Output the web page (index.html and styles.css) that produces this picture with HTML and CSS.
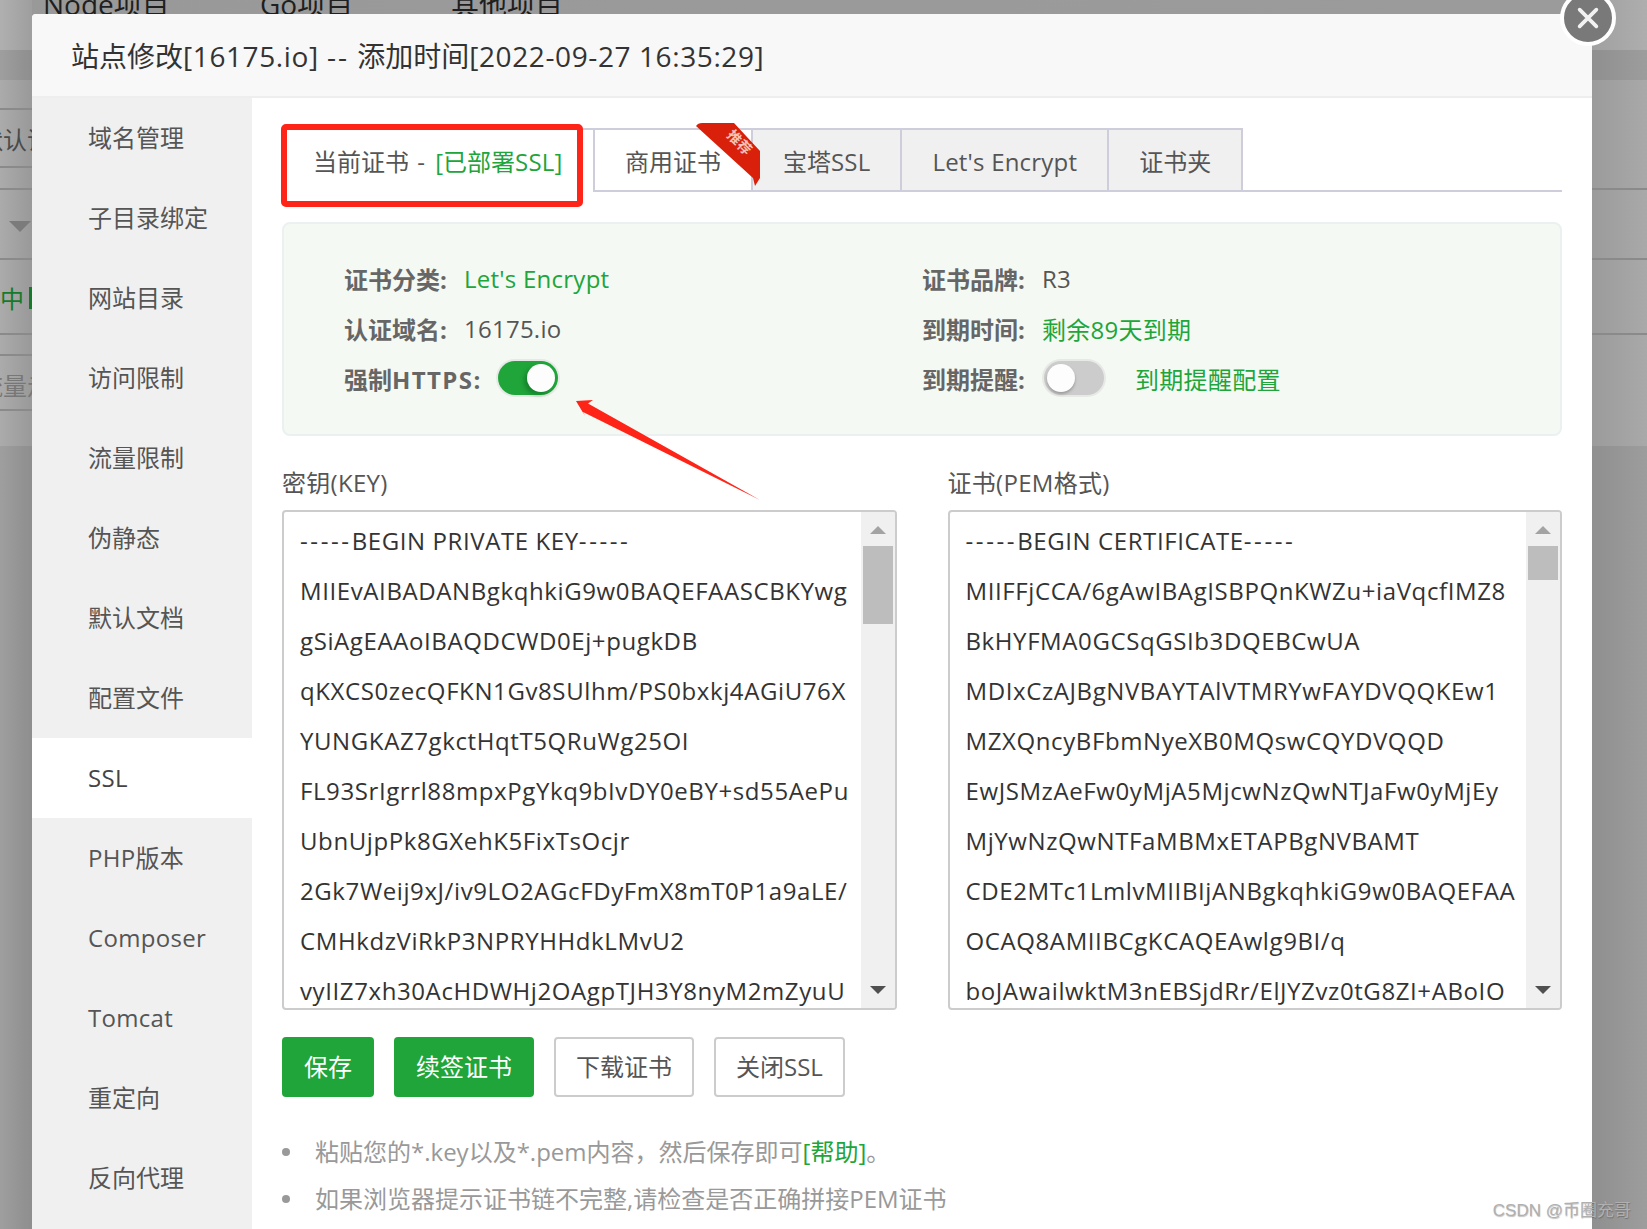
FILE: index.html
```html
<!DOCTYPE html>
<html lang="zh-CN">
<head>
<meta charset="utf-8">
<title>站点修改</title>
<link rel="stylesheet" href="styles.css">
</head>
<body>
<div class="page">
  <div class="bg">
    <div class="bg-side">
      <div class="b b50 light"></div>
      <div class="b b30 dark"></div>
      <div class="b b30 line"></div>
      <div class="b b58 line"><span class="bg-text clip-a">默认证</span></div>
      <div class="b b22 line"></div>
      <div class="b b70 line"><span class="caret"></span></div>
      <div class="b b75 line"><span class="bg-green">中<i class="bg-flag"></i></span></div>
      <div class="b b21 line"></div>
      <div class="b b55 line"><span class="bg-text clip-b">流量走</span></div>
      <div class="b b35"></div>
      <div class="b fill dark"></div>
    </div>
    <div class="bg-mid">
      <div class="bg-nav"><span>Node项目</span><span>Go项目</span><span>其他项目</span></div>
    </div>
    <div class="bg-side bg-right">
      <div class="b b50 light"></div>
      <div class="b b30 dark"></div>
      <div class="b b110 line"></div>
      <div class="b b70 line"></div>
      <div class="b b75 line"></div>
      <div class="b b111"></div>
      <div class="b fill dark"></div>
    </div>
  </div>

  <div class="modal">
    <div class="modal-head">站点修改<span class="lat">[16175.io]</span> <span class="dd dd-title">--</span> 添加时间<span class="lat">[2022-09-27 16:35:29]</span></div>
    <div class="modal-body">
      <nav class="side">
        <a>域名管理</a><a>子目录绑定</a><a>网站目录</a><a>访问限制</a><a>流量限制</a><a>伪静态</a><a>默认文档</a><a>配置文件</a><a class="on lt">SSL</a><a class="lt">PHP版本</a><a class="lt">Composer</a><a class="lt">Tomcat</a><a>重定向</a><a>反向代理</a>
      </nav>
      <main class="main">
        <div class="tabs">
          <div class="tab tab-on">当前证书 <span class="dd">-</span> <span class="green">[已部署<span class="lat2">SSL</span>]</span></div>
          <div class="tab tab-first">商用证书
            <svg class="ribbon" width="66" height="68" viewBox="0 0 66 68" aria-hidden="true">
              <path class="ribbon-fill" d="M1 5 Q3 2 7 2 L39 2 L65 30 L65 57 L60 65 L58 57 Z"/>
              <text class="ribbon-text" transform="translate(41 25) rotate(45)" text-anchor="middle">推荐</text>
            </svg>
          </div>
          <div class="tab"><span>宝塔</span><span class="lat2">SSL</span></div>
          <div class="tab"><span class="lat2">Let's Encrypt</span></div>
          <div class="tab">证书夹</div>
          <div class="annot"></div>
        </div>

        <section class="info">
          <div class="row"><b class="lab">证书分类:</b><span class="green val">Let's Encrypt</span></div>
          <div class="row"><b class="lab">证书品牌:</b><span class="val">R3</span></div>
          <div class="row"><b class="lab">认证域名:</b><span class="val">16175.io</span></div>
          <div class="row"><b class="lab">到期时间:</b><span class="green val">剩余89天到期</span></div>
          <div class="row"><b class="lab lab-wide">强制<span class="https">HTTPS</span>:</b><span class="toggle toggle-on"><i></i></span></div>
          <div class="row"><b class="lab">到期提醒:</b><span class="toggle toggle-off"><i></i></span><a class="green cfg">到期提醒配置</a></div>
        </section>

        <section class="keys">
          <div class="key">
            <div class="key-label">密钥(KEY)</div>
            <div class="ta">
              <div class="ta-text"><span class="dash">-----</span>BEGIN PRIVATE KEY<span class="dash">-----</span><br>MIIEvAIBADANBgkqhkiG9w0BAQEFAASCBKYwg<br>gSiAgEAAoIBAQDCWD0Ej+pugkDB<br>qKXCS0zecQFKN1Gv8SUlhm/PS0bxkj4AGiU76X<br>YUNGKAZ7gkctHqtT5QRuWg25OI<br>FL93SrIgrrl88mpxPgYkq9bIvDY0eBY+sd55AePu<br>UbnUjpPk8GXehK5FixTsOcjr<br>2Gk7Weij9xJ/iv9LO2AGcFDyFmX8mT0P1a9aLE/<br>CMHkdzViRkP3NPRYHHdkLMvU2<br>vyIIZ7xh30AcHDWHj2OAgpTJH3Y8nyM2mZyuU</div>
              <div class="sb"><span class="sb-up"></span><span class="thumb thumb-l"></span><span class="sb-down"></span></div>
            </div>
          </div>
          <div class="key">
            <div class="key-label">证书(PEM格式)</div>
            <div class="ta">
              <div class="ta-text"><span class="dash">-----</span>BEGIN CERTIFICATE<span class="dash">-----</span><br>MIIFFjCCA/6gAwIBAgISBPQnKWZu+iaVqcfIMZ8<br>BkHYFMA0GCSqGSIb3DQEBCwUA<br>MDIxCzAJBgNVBAYTAlVTMRYwFAYDVQQKEw1<br>MZXQncyBFbmNyeXB0MQswCQYDVQQD<br>EwJSMzAeFw0yMjA5MjcwNzQwNTJaFw0yMjEy<br>MjYwNzQwNTFaMBMxETAPBgNVBAMT<br>CDE2MTc1LmlvMIIBIjANBgkqhkiG9w0BAQEFAA<br>OCAQ8AMIIBCgKCAQEAwlg9BI/q<br>boJAwailwktM3nEBSjdRr/ElJYZvz0tG8ZI+ABoIO</div>
              <div class="sb"><span class="sb-up"></span><span class="thumb thumb-r"></span><span class="sb-down"></span></div>
            </div>
          </div>
        </section>

        <div class="btns">
          <button class="btn btn-g">保存</button>
          <button class="btn btn-g">续签证书</button>
          <button class="btn btn-w">下载证书</button>
          <button class="btn btn-w">关闭SSL</button>
        </div>

        <ul class="help">
          <li>粘贴您的*.key以及*.pem内容&#xFF0C;然后保存即可<span class="green">[帮助]</span>。</li>
          <li>如果浏览器提示证书链不完整,请检查是否正确拼接PEM证书</li>
        </ul>
      </main>
    </div>
  </div>

  <div class="close"><svg width="26" height="26" viewBox="0 0 28 28" aria-hidden="true"><path d="M5 5 L23 23 M23 5 L5 23"/></svg></div>

  <svg class="arrow" width="200" height="110" viewBox="570 395 200 110" aria-hidden="true">
    <polygon points="576,401 593,400 588,403.500 760,500 583,412 585,416"/>
  </svg>

  <div class="mark">CSDN @币圈充哥</div>
</div>
</body>
</html>
```
FILE: styles.css
```css
* { box-sizing: border-box; }
html, body { margin: 0; padding: 0; height: 100%; }
body {
  font-family: "Open Sans", "Noto Sans CJK SC", sans-serif;
  font-size: 24px;
  color: #444;
}
.page {
  position: relative;
  width: 1647px;
  height: 1229px;
  overflow: hidden;
  background: linear-gradient(90deg, #ababab 0, #999 32px, #9b9b9b 1592px, #a9a9a9 100%);
}

/* dimmed page behind the dialog */
.bg { display: flex; height: 100%; }
.bg-side { width: 32px; flex: none; display: flex; flex-direction: column; overflow: hidden; }
.bg-right { width: 55px; }
.bg-mid { flex: 1; overflow: hidden; }
.bg-nav { display: flex; font-size: 28px; line-height: 28px; margin-top: -10px; padding-left: 11px; color: #1f1f1f; }
.bg-nav span:nth-child(1) { width: 217px; }
.bg-nav span:nth-child(2) { width: 191px; }
.b { flex: none; display: flex; align-items: center; white-space: nowrap; }
.b50 { height: 50px; }
.b30 { height: 30px; }
.b58 { height: 58px; }
.b22 { height: 22px; }
.b70 { height: 70px; }
.b75 { height: 75px; }
.b21 { height: 21px; }
.b55 { height: 55px; }
.b35 { height: 35px; }
.b110 { height: 110px; }
.b111 { height: 111px; }
.fill { flex: 1; }
.line { border-bottom: 2px solid #8a8a8a; }
.light { background: rgba(255, 255, 255, .06); }
.dark { background: rgba(0, 0, 0, .07); }
.bg-text { font-size: 24px; color: #4a4a4a; margin-left: -21px; }
.clip-b { color: #777; padding-top: 3px; }
.caret { width: 0; height: 0; margin: 4px 0 0 9px; border: 11px solid transparent; border-top: 11px solid #7b7b7b; border-bottom: 0; }
.bg-green { display: flex; align-items: center; color: #157a2a; font-size: 24px; padding-top: 2px; }
.bg-flag { display: block; width: 6px; height: 22px; margin-left: 5px; background: #157a2a; }

/* dialog */
.modal {
  position: absolute;
  left: 32px;
  top: 14px;
  width: 1560px;
  height: 1215px;
  background: #fff;
  border-radius: 4px 4px 0 0;
  overflow: hidden;
  display: flex;
  flex-direction: column;
}
.modal-head {
  flex: none;
  height: 84px;
  padding-left: 39px;
  line-height: 85px;
  font-size: 28px;
  color: #333;
  background: #f8f8f8;
  border-bottom: 2px solid #eee;
  white-space: nowrap;
}
.lat { letter-spacing: .6px; }
.lat2 { letter-spacing: .2px; }
.dd { letter-spacing: 2px; margin: 0 2px; }
.dd-title { margin: 0 1px; }
.modal-body { flex: 1; display: flex; min-height: 0; }
.side { flex: none; width: 220px; background: #f0f0f0; }
.side a { display: block; height: 80px; line-height: 79px; padding-left: 56px; color: #555; }
.side a.on { background: #fff; color: #444; }
.side a.lt { letter-spacing: .3px; }
.main { flex: 1; padding: 30px 30px 0; }
.green { color: #20a53a; }

/* tabs */
.tabs { position: relative; display: flex; height: 64px; border-bottom: 2px solid #cdcddc; }
.tab {
  position: relative;
  height: 64px;
  padding: 0 30px;
  line-height: 63px;
  background: #f0f0f0;
  border-top: 2px solid #cdcddc;
  border-right: 2px solid #cdcddc;
  border-bottom: 2px solid #cdcddc;
  white-space: nowrap;
  color: #555;
}
.tab-first { border-left: 2px solid #cdcddc; z-index: 1; background: none; }
.tab-on { width: 311px; padding: 0 0 0 31px; background: #fff; border-right: 0; border-bottom-color: #fff; }
.annot {
  position: absolute;
  z-index: 2;
  left: -1px;
  top: -4px;
  width: 302px;
  height: 83px;
  border: 6px solid #ff2418;
  border-radius: 5px;
}
.ribbon { position: absolute; left: 100px; top: -9px; }
.ribbon-fill { fill: #d9200a; }
.ribbon-text { font-size: 14px; font-weight: 700; fill: #f4c2b8; }

/* info panel */
.info {
  display: grid;
  grid-template-columns: 578px 1fr;
  grid-auto-rows: 50px;
  height: 214px;
  margin-top: 30px;
  padding: 29px 0 0 60px;
  background: #f5f9f3;
  border: 2px solid #ebf1f1;
  border-radius: 8px;
}
.row { display: flex; align-items: center; white-space: nowrap; color: #555; }
.val { letter-spacing: .25px; }
.lab { width: 120px; flex: none; color: #666; font-weight: 700; }
.lab-wide { width: 154px; }
.https { letter-spacing: 1.4px; }
.toggle {
  position: relative;
  display: block;
  width: 60px;
  height: 34px;
  border-radius: 17px;
  background: #ccc;
  box-shadow: 0 0 0 2px #e6e9e5;
}
.toggle-on { background: #20a53a; }
.toggle-off { margin-left: 2px; }
.toggle i {
  position: absolute;
  left: 3px;
  top: 3px;
  width: 28px;
  height: 28px;
  border-radius: 50%;
  background: #fdfdfd;
  box-shadow: 0 2px 3px rgba(0, 0, 0, .25);
}
.toggle-on i { left: 29px; box-shadow: -3px 3px 4px rgba(0, 70, 20, .35); }
.cfg { margin-left: 31px; letter-spacing: .3px; }

/* key and cert */
.keys { display: grid; grid-template-columns: 1fr 1fr; gap: 51px; margin-top: 29px; }
.key-label { height: 36px; line-height: 36px; margin-bottom: 9px; color: #555; white-space: nowrap; letter-spacing: .3px; }
.ta {
  display: flex;
  height: 500px;
  background: #fff;
  border: 2px solid #ccc;
  border-radius: 4px;
  overflow: hidden;
}
.ta-text {
  flex: 1;
  min-width: 0;
  padding: 4px 0 0 16px;
  line-height: 50px;
  color: #333;
  white-space: nowrap;
  overflow: hidden;
  letter-spacing: .6px;
}
.dash { letter-spacing: 2.6px; }
.sb { flex: none; width: 34px; display: flex; flex-direction: column; align-items: center; background: #f0f0f0; }
.sb-up, .sb-down { flex: none; width: 0; height: 0; border-left: 8px solid transparent; border-right: 8px solid transparent; }
.sb-up { margin: 14px 0 12px; border-bottom: 8px solid #a3a3a3; }
.sb-down { margin: auto 0 14px; border-top: 8px solid #505050; }
.thumb { flex: none; width: 30px; background: #bdbdbd; }
.thumb-l { height: 78px; }
.thumb-r { height: 34px; }

/* buttons */
.btns { display: flex; gap: 20px; margin-top: 27px; }
.btn {
  height: 60px;
  padding: 0 20px 4px;
  font: inherit;
  border-radius: 4px;
  white-space: nowrap;
}
.btn-g { background: #20a53a; border: 0; color: #fff; padding: 0 22px 4px; }
.btn-w { background: #fff; border: 2px solid #ccc; color: #555; }

/* help */
.help { list-style: none; margin: 31px 0 0; padding: 0; color: #999; }
.help li { position: relative; height: 47px; line-height: 48px; padding-left: 33px; white-space: nowrap; }
.help li::before {
  content: "";
  position: absolute;
  left: 0;
  top: 20px;
  width: 8px;
  height: 8px;
  border-radius: 50%;
  background: #999;
}

/* overlays */
.close {
  position: absolute;
  left: 1560px;
  top: -10px;
  width: 56px;
  height: 56px;
  display: flex;
  align-items: center;
  justify-content: center;
  border: 4px solid #fff;
  border-radius: 50%;
  background: #797979;
}
.close path { stroke: #f2f2f2; stroke-width: 4; fill: none; stroke-linecap: round; }
.arrow { position: absolute; left: 570px; top: 395px; }
.arrow polygon { fill: #ff2418; }
.mark {
  position: absolute;
  right: 16px;
  bottom: 6px;
  font-family: "Liberation Sans", "Noto Sans CJK SC", sans-serif;
  font-size: 17px;
  line-height: 24px;
  color: #b0b0b0;
  text-shadow: .5px .5px 1px rgba(0, 0, 0, .25);
}
```
